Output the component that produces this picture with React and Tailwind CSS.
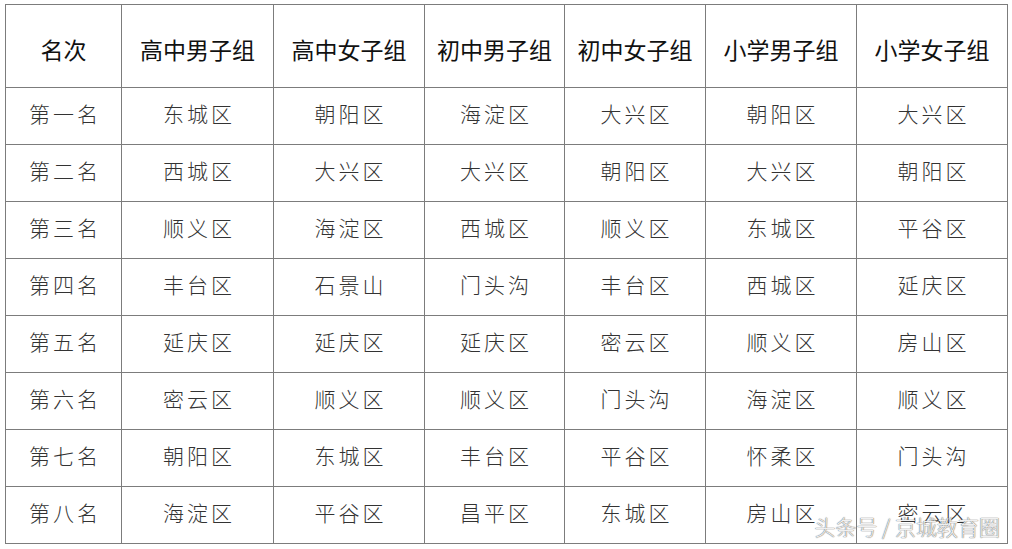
const headers = ['名次', '高中男子组', '高中女子组', '初中男子组', '初中女子组', '小学男子组', '小学女子组']
const widths = ['w-[116px]', 'w-[152px]', 'w-[151px]', 'w-[140px]', 'w-[141px]', 'w-[151px]', 'w-[151px]']

const rows = [
  ['第一名', '东城区', '朝阳区', '海淀区', '大兴区', '朝阳区', '大兴区'],
  ['第二名', '西城区', '大兴区', '大兴区', '朝阳区', '大兴区', '朝阳区'],
  ['第三名', '顺义区', '海淀区', '西城区', '顺义区', '东城区', '平谷区'],
  ['第四名', '丰台区', '石景山', '门头沟', '丰台区', '西城区', '延庆区'],
  ['第五名', '延庆区', '延庆区', '延庆区', '密云区', '顺义区', '房山区'],
  ['第六名', '密云区', '顺义区', '顺义区', '门头沟', '海淀区', '顺义区'],
  ['第七名', '朝阳区', '东城区', '丰台区', '平谷区', '怀柔区', '门头沟'],
  ['第八名', '海淀区', '平谷区', '昌平区', '东城区', '房山区', '密云区'],
]

export default function App() {
  return (
    <div className="relative w-[1012px] h-[549px] bg-white overflow-hidden pt-[4px] pl-[5px]">
      <table className="table-fixed border-collapse w-[1003px] font-['Noto_Sans_CJK_SC',sans-serif]">
        <colgroup>
          {widths.map((w, i) => (
            <col key={i} className={w} />
          ))}
        </colgroup>
        <thead>
          <tr className="h-[83px]">
            {headers.map((h) => (
              <th
                key={h}
                className="border border-[#7c7c7c] text-[23px] font-normal text-[#111] text-center align-middle pt-[6px]"
              >
                {h}
              </th>
            ))}
          </tr>
        </thead>
        <tbody>
          {rows.map((row, ri) => (
            <tr key={ri} className="h-[57px]">
              {row.map((cell, ci) => (
                <td
                  key={ci}
                  className="border border-[#7c7c7c] text-[21px] font-light text-[#333] text-center align-middle tracking-[3px] pl-[3px] pb-[5px]"
                >
                  {cell}
                </td>
              ))}
            </tr>
          ))}
        </tbody>
      </table>

      <div className="absolute right-[12px] bottom-[7px] text-[21px] text-white/90 font-['Noto_Sans_CJK_SC',sans-serif] font-light [text-shadow:0_0_1px_#666,0_0_1px_#666]">
        头条号 / 京城教育圈
      </div>
    </div>
  )
}
